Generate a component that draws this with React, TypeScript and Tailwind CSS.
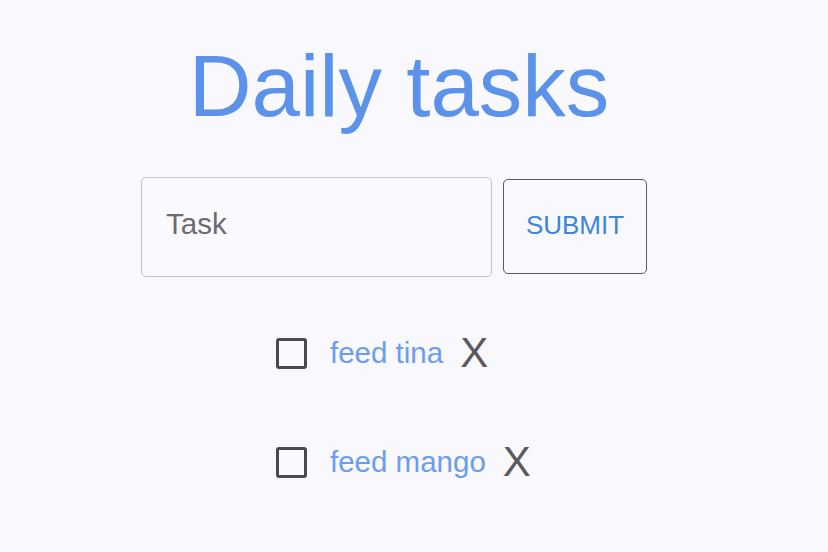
import React from "react";

export default function App() {
  const tasks = ["feed tina", "feed mango"];
  return (
    <div
      className="min-h-[552px] w-full bg-[#f8f8fd] pt-[42px]"
      style={{ fontFamily: '"Liberation Sans", Arial, sans-serif' }}
    >
      <h1 className="text-center text-[87px] leading-none text-[#5d92ea] pr-[30px]">
        Daily tasks
      </h1>
      <div className="mt-[48px] flex items-center pl-[141px] gap-[11px]">
        <div className="flex h-[100px] w-[351px] items-center rounded-[5px] border border-[#c4c4c8] bg-[#fafafe] px-[24px] pb-[6px]">
          <span className="text-[29.5px] text-[#6b6b70]">Task</span>
        </div>
        <button className="mt-[-2px] flex h-[95px] w-[144px] items-center justify-center rounded-[5px] border border-[#5a5a5e] pb-[2px] text-[26px] text-[#3d86d8]">
          SUBMIT
        </button>
      </div>
      <ul className="mt-[61px] flex flex-col gap-[79px] pl-[276px]">
        {tasks.map((t) => (
          <li key={t} className="flex h-[30px] items-center">
            <span className="h-[31px] w-[31px] rounded-[3px] border-[3px] border-[#4a4a4e]" />
            <span className="ml-[23px] text-[29.5px] text-[#6c9ded]">{t}</span>
            <span className="ml-[17px] text-[42px] leading-none text-[#5a5a5e]">X</span>
          </li>
        ))}
      </ul>
    </div>
  );
}
